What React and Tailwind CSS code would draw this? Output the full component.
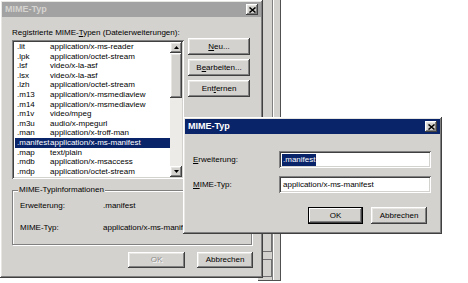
import React from 'react'

const rows = [
  ['.lit', 'application/x-ms-reader'],
  ['.lpk', 'application/octet-stream'],
  ['.lsf', 'video/x-la-asf'],
  ['.lsx', 'video/x-la-asf'],
  ['.lzh', 'application/octet-stream'],
  ['.m13', 'application/x-msmediaview'],
  ['.m14', 'application/x-msmediaview'],
  ['.m1v', 'video/mpeg'],
  ['.m3u', 'audio/x-mpegurl'],
  ['.man', 'application/x-troff-man'],
  ['.manifest', 'application/x-ms-manifest'],
  ['.map', 'text/plain'],
  ['.mdb', 'application/x-msaccess'],
  ['.mdp', 'application/octet-stream'],
  ['.me', 'application/x-troff-me'],
]

const raised =
  'shadow-[inset_-1px_-1px_#404040,inset_1px_1px_#ffffff,inset_-2px_-2px_#808080,inset_2px_2px_#e8e6e2]'
const sunken =
  'shadow-[inset_1px_1px_#808080,inset_-1px_-1px_#ffffff,inset_2px_2px_#404040,inset_-2px_-2px_#d4d2ce]'

function Btn({ children, className = '', disabled, isDefault }) {
  return (
    <div
      className={`flex items-center justify-center bg-[#d4d2ce] ${
        isDefault
          ? 'border border-black shadow-[inset_-1px_-1px_#404040,inset_1px_1px_#ffffff,inset_-2px_-2px_#808080]'
          : raised
      } ${disabled ? 'text-[#8c8c8c] [text-shadow:1px_1px_#ffffff]' : 'text-black'} ${className}`}
    >
      {children}
    </div>
  )
}

function CloseBox() {
  return (
    <div className={`flex h-[11px] w-[12px] items-center justify-center bg-[#d4d2ce] ${raised}`}>
      <svg width="7" height="6" viewBox="0 0 7 6">
        <path d="M0.5 0.5 L6.5 5.5 M6.5 0.5 L0.5 5.5" stroke="#000" strokeWidth="1.5" />
      </svg>
    </div>
  )
}

function Arrow({ down }) {
  return (
    <div className={`flex h-[11px] w-[12px] shrink-0 items-center justify-center bg-[#d4d2ce] ${raised}`}>
      <svg width="5" height="3" viewBox="0 0 5 3">
        <path d={down ? 'M0 0 H5 L2.5 3 Z' : 'M0 3 H5 L2.5 0 Z'} fill="#000" />
      </svg>
    </div>
  )
}

export default function App() {
  return (
    <div className="relative h-[283px] w-[468px] overflow-hidden bg-white font-['Liberation_Sans',Arial,sans-serif] text-[8px] text-black">
      {/* window behind */}
      <div className="absolute left-[258px] top-0 flex h-[281px] w-[23px] border-b border-r border-[#505050] bg-[#d4d2ce]">
        <div className="flex w-[14px] flex-col justify-end pb-[3px]">
          <div className="mb-[7px] h-[20px] border-y border-r border-[#707070]" />
          <div className="h-[18px] border-y border-r border-[#707070]" />
        </div>
        <div className="h-full w-[7px] border-l border-[#808080] shadow-[inset_1px_0_#ffffff]" />
      </div>

      {/* main dialog */}
      <div className={`absolute left-0 top-0 flex h-[278px] w-[263px] flex-col bg-[#d4d2ce] p-[2px] ${raised}`}>
        <div className="flex h-[15px] items-center justify-between bg-[#a2a2a2] pl-[3px] pr-[3px]">
          <span className="text-[9px] font-bold text-[#d6d4d0]">MIME-Typ</span>
          <CloseBox />
        </div>
        <div className="flex flex-col pl-[10px] pr-[8px]">
          <div className="mt-[11px] h-[10px] leading-[10px]">
            Registrierte MIME-<span className="underline">T</span>ypen (Dateierweiterungen):
          </div>
          <div className="mt-[2px] flex items-start gap-[4px]">
            <div className={`flex h-[139px] w-[172px] bg-white p-[2px] ${sunken}`}>
              <div className="flex flex-1 flex-col overflow-hidden pl-[1px] pt-[0px]">
                {rows.map(([ext, type]) => {
                  const sel = ext === '.manifest'
                  return (
                    <div
                      key={ext}
                      className={`flex h-[9.6px] shrink-0 items-center whitespace-nowrap leading-[9.6px] ${
                        sel ? 'bg-[#0a246a] text-white' : ''
                      }`}
                    >
                      <span className="w-[35px] pl-[2px]">{ext}</span>
                      <span>{type}</span>
                    </div>
                  )
                })}
              </div>
              <div className="flex w-[12px] flex-col bg-[#ecebe8]">
                <Arrow />
                <div className={`h-[45px] shrink-0 bg-[#d4d2ce] ${raised}`} />
                <div className="flex-1" />
                <Arrow down />
              </div>
            </div>
            <div className="mt-[-2px] flex w-[62px] flex-col gap-[4px]">
              <Btn className="h-[17px]">
                <span className="underline">N</span>eu...
              </Btn>
              <Btn className="h-[17px]">
                B<span className="underline">e</span>arbeiten...
              </Btn>
              <Btn className="h-[17px]">
                Ent<span className="underline">f</span>ernen
              </Btn>
            </div>
          </div>
          <fieldset className="mt-[6px] h-[60px] w-[240px] border border-[#808080] shadow-[inset_1px_1px_#ffffff,1px_1px_#ffffff]">
            <legend className="ml-[5px] bg-[#d4d2ce] px-[1px] leading-[10px]">MIME-Typinformationen</legend>
            <div className="mt-[6px] flex h-[10px] items-center pl-[7px]">
              <span className="w-[83px]">Erweiterung:</span>
              <span>.manifest</span>
            </div>
            <div className="mt-[12px] flex h-[10px] items-center pl-[7px]">
              <span className="w-[83px]">MIME-Typ:</span>
              <span>application/x-ms-manifest</span>
            </div>
          </fieldset>
          <div className="mt-[7px] flex justify-end gap-[12px]">
            <Btn disabled className="h-[16px] w-[57px]">
              OK
            </Btn>
            <Btn className="h-[16px] w-[56px]">Abbrechen</Btn>
          </div>
        </div>
      </div>

      {/* edit dialog */}
      <div className={`absolute left-[183px] top-[117px] flex h-[117px] w-[259px] flex-col bg-[#d4d2ce] p-[2px] ${raised}`}>
        <div className="flex h-[15px] items-center justify-between bg-[#0a246a] pl-[3px] pr-[3px]">
          <span className="text-[9px] font-bold text-white">MIME-Typ</span>
          <CloseBox />
        </div>
        <div className="flex flex-col pl-[8px] pr-[9px]">
          <div className="mt-[17px] flex items-center">
            <span className="w-[86px]">
              <span className="underline">E</span>rweiterung:
            </span>
            <div className={`flex h-[17px] w-[152px] items-center bg-white pl-[3px] ${sunken}`}>
              <span className="bg-[#0a246a] px-[1px] text-white">.manifest</span>
            </div>
          </div>
          <div className="mt-[8px] flex items-center">
            <span className="w-[86px]">
              <span className="underline">M</span>IME-Typ:
            </span>
            <div className={`flex h-[17px] w-[152px] items-center bg-white pl-[4px] ${sunken}`}>
              application/x-ms-manifest
            </div>
          </div>
          <div className="mt-[14px] flex justify-end gap-[8px] pr-[4px]">
            <Btn isDefault className="h-[17px] w-[55px]">
              OK
            </Btn>
            <Btn className="h-[17px] w-[56px]">Abbrechen</Btn>
          </div>
        </div>
      </div>
    </div>
  )
}
